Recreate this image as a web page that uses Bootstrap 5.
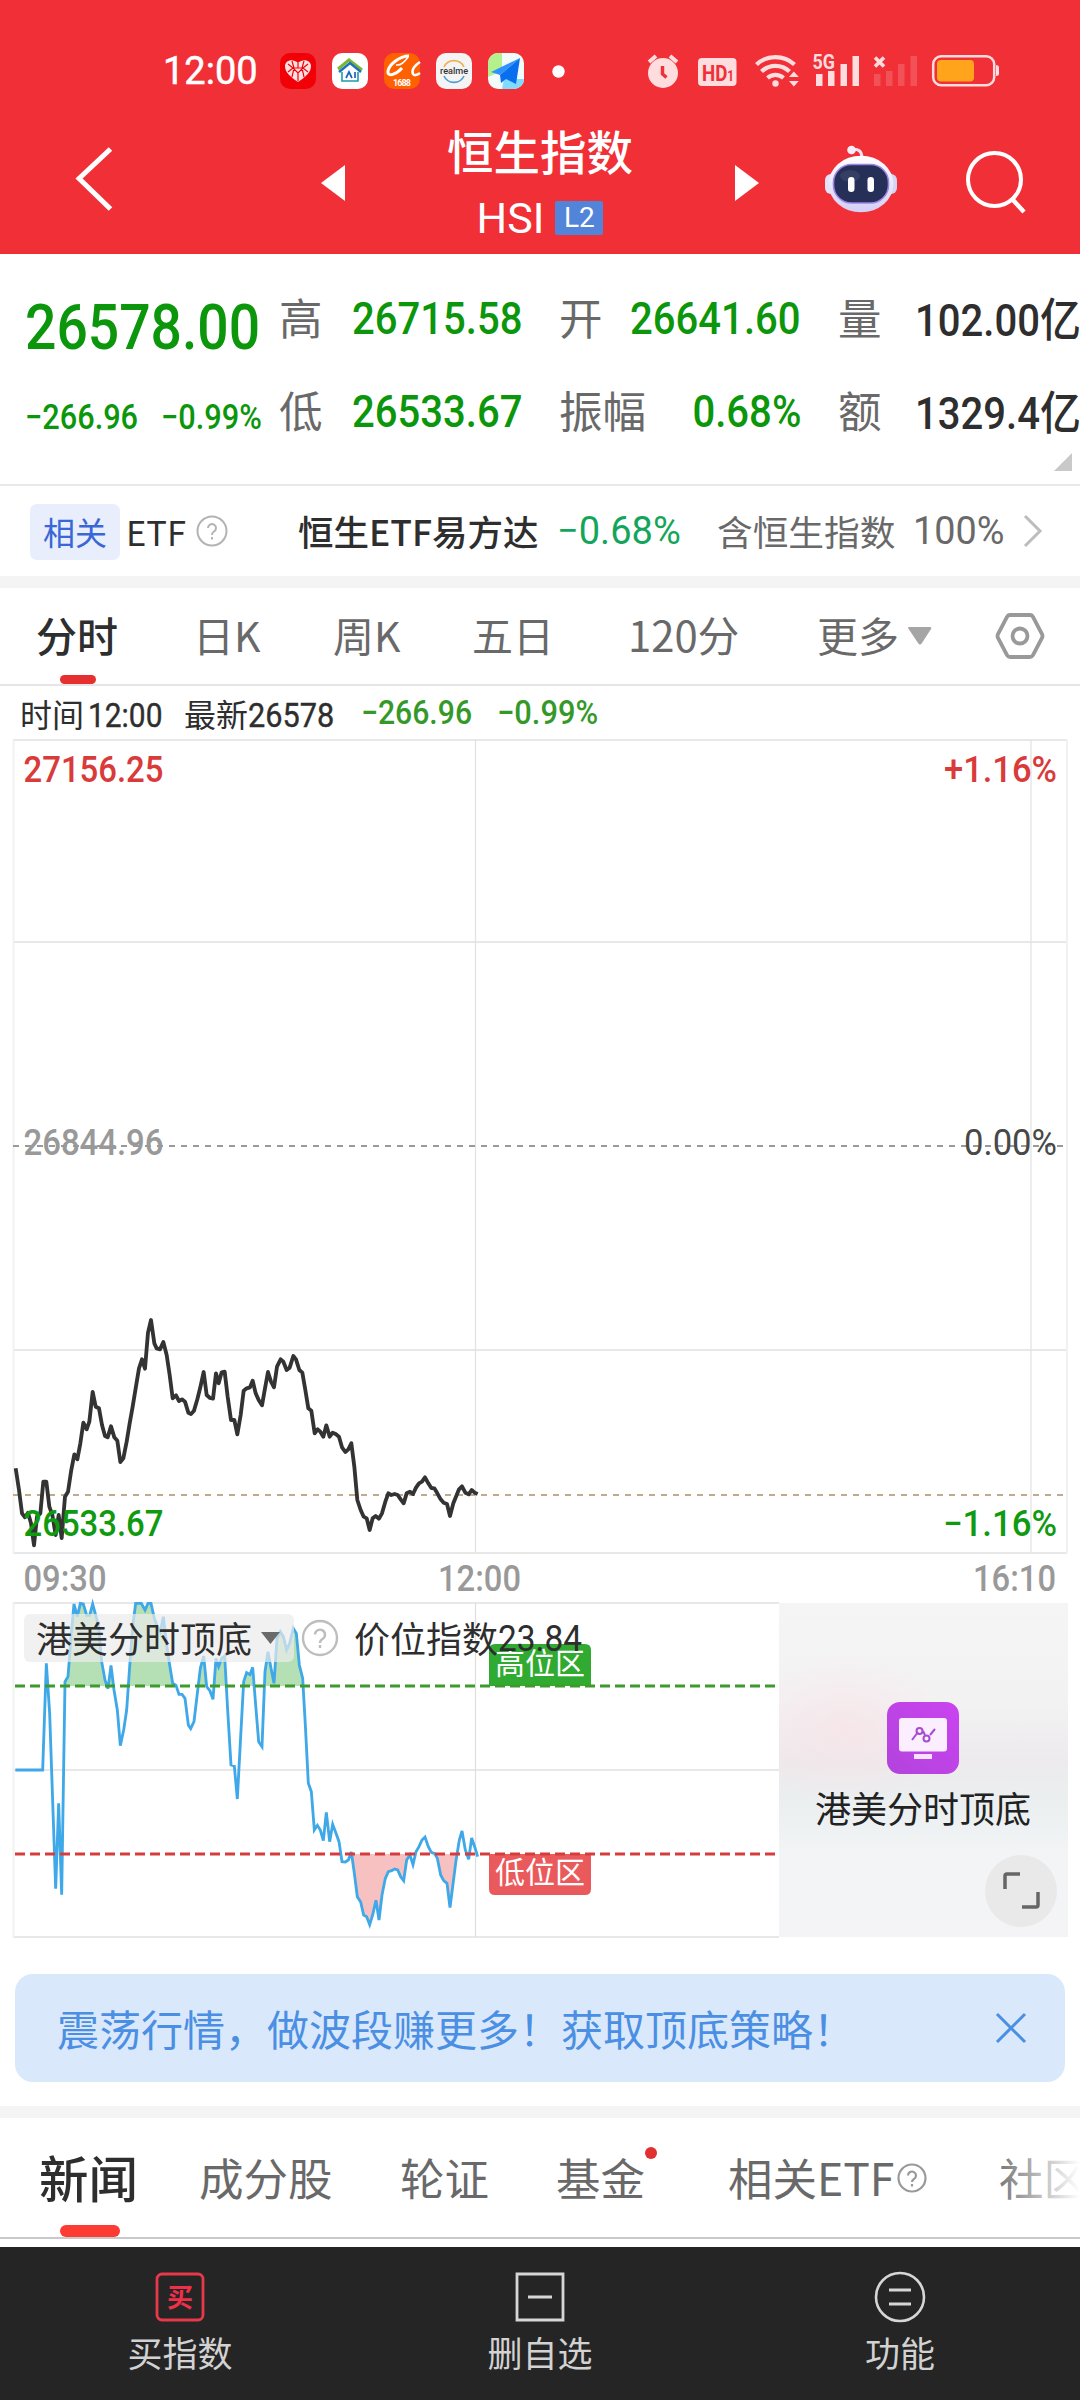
<!DOCTYPE html>
<html lang="zh-CN">
<head>
<meta charset="utf-8">
<meta name="viewport" content="width=device-width, initial-scale=1">
<title>恒生指数 HSI</title>
<link href="https://cdn.jsdelivr.net/npm/bootstrap@5.3.0/dist/css/bootstrap.min.css" rel="stylesheet">
<style>
  :root { --up: #d93a3a; --down: #0b960b; --ink: #2e2e2e; --sub: #696969; }
  html, body { margin: 0; background: #fff; }
  body { width: 1080px; height: 2400px; overflow: hidden; color: var(--ink); font-family: "Noto Sans CJK SC", sans-serif; line-height: 1; }
  svg { display: block; flex: none; overflow: visible; }
  .din { font-family: Roboto, sans-serif; font-weight: 500; white-space: nowrap; display: inline-block; flex: none; transform-origin: 0 50%; transform: scaleX(.9); }
  .din-end { transform-origin: 100% 50%; }
  .din-thin { font-weight: 400; }
  .down { color: var(--down); }
  .app-head { height: 254px; background: #f12f37; color: #fff; }
  .status-bar { height: 92px; padding: 50px 81px 0 163px; }
  .clock { font: 400 38px/42px Roboto, sans-serif; width: 117px; -webkit-text-stroke: .5px #fff; }
  .app-ic { margin-right: 16px; }
  .title-bar { height: 162px; padding: 30px 54px 0 76px; }
  .title-name { font-size: 46.5px; line-height: 56px; font-weight: 500; }
  .title-code { font: 400 43px/42px Roboto, sans-serif; }
  .lv { background: #5285d9; width: 48px; height: 34px; border-radius: 2px; font: 400 28px/34px Roboto, sans-serif; text-align: center; margin-left: 11px; }
  .quote { height: 232px; border-bottom: 2px solid #e9e9e9; padding-top: 18px; position: relative; overflow: hidden;
    display: grid; grid-template-columns: 279px 73px 207px 90px 152px 37px 77px 165px; grid-template-rows: 93px 93px; align-items: center; }
  .quote .lab { font-size: 43.5px; line-height: 44px; margin-top: -3px; color: var(--sub); white-space: nowrap; }
  .quote .val { font-size: 45px; line-height: 54px; transform: scaleX(.89); }
  .quote .big { font-size: 63.5px; font-weight: 500; transform: scaleX(.87); margin-top: 19px; }
  .quote .chg { font-size: 34.5px; transform: scaleX(.89); width: 136px; }
  .vol .cj { font: 500 46px/54px "Noto Sans CJK SC", sans-serif; }
  .corner { position: absolute; right: 8px; bottom: 13px; }
  .etf { height: 90px; }
  .etf-tag { width: 90px; height: 56px; margin: 1px 6px 0 30px; background: #e8eefb; color: #3a66d8; border-radius: 7px; font-size: 32px; line-height: 54px; text-align: center; }
  .band { height: 12px; background: #f4f4f4; }
  .period { height: 98px; border-bottom: 2px solid #e6e6e6; font-size: 41px; color: var(--sub); padding-left: 36px; position: relative; }
  .period span { line-height: 92px; white-space: nowrap; }
  .bar-on { position: absolute; left: 60px; bottom: 0; height: 9px; width: 36px; border-radius: 5px; background: #e63030; }
  .info { height: 54px; font-size: 32px; padding-left: 20px; line-height: 54px; white-space: nowrap; }
  .chart text { font-family: Roboto, sans-serif; font-weight: 500; font-size: 36px; }
  .chart .cjk { font-family: "Noto Sans CJK SC", sans-serif; font-weight: 400; }
  .notice { margin: 36px 15px 0 15px; height: 108px; border-radius: 18px; background: #dae8fb; color: #4a8fe3; font-size: 42px; padding: 0 39px 0 42px; }
  .news { height: 121px; border-bottom: 2px solid #c9c9c9; color: var(--sub); font-size: 44.5px; padding-left: 39px; position: relative; white-space: nowrap; overflow: hidden; }
  .news span { line-height: 118px; flex: none; }
  .fade-end { position: absolute; right: 0; top: 0; width: 90px; height: 118px; background: linear-gradient(90deg, rgba(255,255,255,0), #fff); }
  .news-on { position: absolute; left: 60px; bottom: 0; width: 60px; height: 12px; border-radius: 6px; background: #fc3b33; }
  .news-dot { position: absolute; left: 645px; top: 29px; width: 12px; height: 12px; border-radius: 50%; background: #e03030; }
  .dock { height: 153px; background: #252525; color: #d2d2d2; margin-top: 8px; font-size: 35px; padding-top: 25px; }
  .dock span { line-height: 46px; margin-top: 7px; }
</style>
<script src="https://cdn.jsdelivr.net/npm/bootstrap@5.3.0/dist/js/bootstrap.bundle.min.js"></script>
</head>
<body>
<header class="app-head">
  <div class="status-bar d-flex align-items-center">
    <span class="clock">12:00</span>
    <svg class="app-ic" width="36" height="36" viewBox="0 0 36 36"><rect width="36" height="36" rx="10" fill="#f20008"/><path d="M18 29 C11 24 5 20 5 13 C5 7 13 5 18 10 C23 5 31 7 31 13 C31 20 25 24 18 29Z" fill="#ffe1e1"/><path d="M8 11l5 4-5 4m20-8-5 4 5 4M12 8l2 7-2 9m12-16-2 7 2 9M18 10v5m-5 0h10l-5 5zM18 20v8" stroke="#f20008" stroke-width="1.200" fill="none"/></svg>
    <svg class="app-ic" width="36" height="36" viewBox="0 0 36 36"><rect width="36" height="36" rx="10" fill="#fff"/><path d="M6 16 17 7l13 10" fill="none" stroke="#78b833" stroke-width="3"/><path d="M7 19 18 10l11 9" fill="none" stroke="#1f70c0" stroke-width="2.400"/><path d="M10 19v9h16v-9" fill="none" stroke="#1d9bb0" stroke-width="1.600"/><path d="m14 25 3-6 3 6m3-6v6" fill="none" stroke="#1a65b8" stroke-width="1.700"/></svg>
    <svg class="app-ic" width="36" height="36" viewBox="0 0 36 36"><rect width="36" height="36" rx="10" fill="#ff6000"/><path d="M25 3C15 3 5 12 4 18c-1 7 9 3 14-3" fill="none" stroke="#fff" stroke-width="3"/><path d="M12 12q6 1 12-8" fill="none" stroke="#fff" stroke-width="1.500"/><path d="M36 9c-5 3-9 8-7 12 1 2 4 1 7-1" fill="none" stroke="#fff" stroke-width="2.600"/><text x="9" y="33" font-family="Roboto" font-weight="700" font-size="9" textLength="18" fill="#fff">1688</text></svg>
    <svg class="app-ic" width="36" height="36" viewBox="0 0 36 36"><rect width="36" height="36" rx="10" fill="#f4f4f4"/><path d="M8 14a11 11 0 0 1 20 0" fill="none" stroke="#efb057" stroke-width="1.600"/><path d="M8 23a11 11 0 0 0 20 0" fill="none" stroke="#4e9bd8" stroke-width="1.600"/><text x="4" y="21" font-family="Roboto" font-weight="500" font-size="9.500" textLength="28" lengthAdjust="spacingAndGlyphs" fill="#333">realme</text></svg>
    <svg class="app-ic" width="36" height="36" viewBox="0 0 36 36"><rect width="36" height="36" rx="10" fill="#f2fbfb"/><path d="M10 0h4v18L0 24V10A10 10 0 0 1 10 0Z" fill="#b4f08c"/><path d="M16 26h20a10 10 0 0 1-10 10H14z" fill="#7fdcff"/><path d="M32 5 3 19l9 3z" fill="#2d92ff"/><path d="m32 5-20 17 1 8 5-4 10 5z" fill="#0a6fee"/></svg>
    <svg width="13" height="13" viewBox="0 0 13 13" style="margin-left:12px"><circle cx="6.500" cy="6.500" r="6.200" fill="#fff"/></svg>
    <svg class="ms-auto" width="354" height="38" viewBox="645 52 354 38" fill="#ffdcdd">
      <circle cx="663" cy="73" r="15"/><path d="m649 62 7-6m21 6-7-6" stroke="#ffdcdd" stroke-width="4" fill="none"/><path d="M662.500 66v8l4 3.500" stroke="#f12f37" stroke-width="3.400" fill="none"/>
      <rect x="698" y="58" width="38.500" height="28" rx="4"/><text x="702" y="80.500" font-family="Roboto" font-weight="700" font-size="22.500" textLength="32" lengthAdjust="spacingAndGlyphs" fill="#f12f37">HD<tspan font-size="14">1</tspan></text>
      <g fill="none" stroke="#ffdcdd" stroke-width="4.200"><path d="M756.500 64.500a28 28 0 0 1 38 0"/><path d="M761.500 71.500a20 20 0 0 1 28 0"/><path d="M767.500 78a12 12 0 0 1 16 0"/></g><circle cx="775.500" cy="83.500" r="3.200"/><path d="m789 77 4.800-5.500 5 5.500zm0 4 4.800 5.500 5-5.500z"/>
      <text x="812.500" y="69" font-family="Roboto" font-weight="700" font-size="20.500" textLength="22.500" lengthAdjust="spacingAndGlyphs">5G</text>
      <path d="M816 74h6.500v12H816zM828 71h6.500v15H828zM840.500 64h6.500v22h-6.500zM852.500 56h6.500v30h-6.500z"/>
      <path d="m875 57.500 9 9m0-9-9 9" stroke="#ffdcdd" stroke-width="3.600"/><path opacity=".2" d="M874 74h6.500v12H874zM886 71h6.500v15H886zM898 64h6.500v22H898zM910.500 56h6.500v30h-6.500z"/>
      <rect x="933.200" y="56.200" width="61" height="29" rx="8" fill="none" stroke="#ffdcdd" stroke-width="2.500"/><rect x="937" y="60" width="37" height="21.500" rx="4" fill="#ffa41b"/><path d="M996 65q3 0 3 2.500v6q0 2.500-3 2.500z"/>
    </svg>
  </div>
  <div class="title-bar d-flex align-items-start">
    <svg width="36" height="64" viewBox="0 0 36 66" preserveAspectRatio="none" style="margin-top:25px"><path d="M34.500 2 3 32.500 34.500 64" fill="none" stroke="#fff" stroke-width="5"/></svg>
    <svg width="24" height="36" viewBox="0 0 24 36" style="margin:43px 0 0 209px"><path d="M0 18 24 0v36z" fill="#fff"/></svg>
    <div style="width:390px" class="d-flex flex-column align-items-center">
      <div class="title-name">恒生指数</div>
      <div class="d-flex align-items-center" style="margin-top:19px"><span class="title-code">HSI</span><span class="lv">L2</span></div>
    </div>
    <svg width="24" height="36" viewBox="0 0 24 36" style="margin-top:43px"><path d="M24 18 0 0v36z" fill="#fff"/></svg>
    <svg width="74" height="68" viewBox="824 145 74 68" style="margin:23px 0 0 65px">
      <defs><linearGradient id="shell" x1="0" y1="0" x2="0" y2="1"><stop offset="0" stop-color="#fff"/><stop offset=".6" stop-color="#e4e2fb"/><stop offset="1" stop-color="#d3cff6"/></linearGradient></defs>
      <path d="M851 149.500q11-2 11 9" fill="none" stroke="#f1e3f4" stroke-width="3"/><circle cx="851.500" cy="150" r="4.300" fill="#f6edf8"/>
      <rect x="825" y="174" width="14" height="20" rx="6" fill="#e4e2fa"/><rect x="883" y="174" width="14" height="20" rx="6" fill="#d6d4f6"/>
      <ellipse cx="861" cy="184" rx="32.500" ry="28.300" fill="url(#shell)"/><rect x="833.500" y="164.500" width="55" height="38.500" rx="18" fill="#262f57" stroke="#9d84e4" stroke-width="1.600"/><ellipse cx="850" cy="176" rx="10" ry="6" fill="#42506f" opacity=".5"/><rect x="848" y="177" width="6.500" height="15" rx="3.200" fill="#fff"/><rect x="867.500" y="177" width="6.500" height="15" rx="3.200" fill="#fff"/>
    </svg>
    <svg class="ms-auto" width="60" height="62" viewBox="966 152 60 62" style="margin-top:29px"><circle cx="994.500" cy="180.500" r="26.500" fill="none" stroke="#fff" stroke-width="4"/><path d="m1013 201 11 12" stroke="#fff" stroke-width="4.500"/></svg>
  </div>
</header>

<section class="quote">
  <div style="padding-left:25px"><span class="din big down">26578.00</span></div>
  <span class="lab">高</span><span class="din val down">26715.58</span><span class="lab">开</span><span class="d-flex justify-content-end"><span class="din din-end val down">26641.60</span></span><span></span><span class="lab">量</span><span class="din val vol">102.00<span class="cj">亿</span></span>
  <div class="d-flex down" style="padding:12px 0 0 25px"><span class="din chg">−266.96</span><span class="din chg">−0.99%</span></div>
  <span class="lab">低</span><span class="din val down">26533.67</span><span class="lab">振幅</span><span class="d-flex justify-content-end"><span class="din din-end val down">0.68%</span></span><span></span><span class="lab">额</span><span class="din val vol">1329.4<span class="cj">亿</span></span>
  <svg class="corner" width="18" height="18" viewBox="0 0 18 18"><path d="M18 0v18H0z" fill="#c9c9c9"/></svg>
</section>

<section class="etf d-flex align-items-center">
  <span class="etf-tag">相关</span><span style="font-size:34.500px;width:70px">ETF</span>
  <svg width="32" height="32" viewBox="0 0 32 32"><circle cx="16" cy="16" r="14.500" fill="none" stroke="#b3b3b3" stroke-width="2"/><path d="M12 13a4 4 0 1 1 6 3.500q-2 1.200-2 3.500m0 2v2.500" fill="none" stroke="#b3b3b3" stroke-width="2"/></svg>
  <span class="text-nowrap" style="font-size:35.500px;font-weight:500;margin-left:70px;width:259px">恒生ETF易方达</span>
  <span class="din din-thin" style="font-size:39px;color:#13a65a;width:160px;transform:scaleX(.975)">−0.68%</span>
  <span class="text-nowrap" style="font-size:35.700px;color:var(--sub);width:196px">含恒生指数</span>
  <span class="din din-thin" style="font-size:39px;color:var(--sub);width:110px;transform:scaleX(.97)">100%</span>
  <svg width="20" height="34" viewBox="0 0 20 34"><path d="m2 2 15 15L2 32" fill="none" stroke="#bdbdbd" stroke-width="3"/></svg>
</section>
<div class="band"></div>

<nav class="period d-flex">
  <span style="width:157px;color:var(--ink);font-weight:500">分时</span><span style="width:140px">日K</span><span style="width:139px">周K</span><span style="width:156px">五日</span><span style="width:189px;font-size:41.800px">120分</span><span>更多</span>
  <svg width="24" height="18" viewBox="0 0 24 18" style="margin:39px 0 0 9px"><path d="M0 1q0-1 1-1h21q2 0 1 2L14 16q-2 3-4 0z" fill="#a5a5a5"/></svg>
  <svg width="50" height="48" viewBox="0 0 50 48" style="margin:24px 0 0 63px"><path d="M15 3h20q2 0 3 2l9 17q1 2 0 4l-9 17q-1 2-3 2H15q-2 0-3-2L3 26q-1-2 0-4l9-17q1-2 3-2z" fill="none" stroke="#999" stroke-width="3.800"/><circle cx="25" cy="24" r="7.500" fill="none" stroke="#999" stroke-width="3.800"/></svg>
  <i class="bar-on"></i>
</nav>

<div class="info d-flex">
  <span style="width:164px">时间<span class="din din-thin ms-1" style="font-size:32.500px;transform:scaleX(.92);-webkit-text-stroke:.4px">12:00</span></span>
  <span style="width:177px">最新<span class="din din-thin" style="font-size:33px;transform:scaleX(.93);-webkit-text-stroke:.4px">26578</span></span>
  <span class="din" style="font-size:33.500px;width:136px;color:#35992a;transform:scaleX(.9)">−266.96</span><span class="din" style="font-size:33.500px;color:#35992a;transform:scaleX(.92)">−0.99%</span>
</div>

<svg class="chart" width="1080" height="1198" viewBox="0 740 1080 1198">
  <defs>
    <clipPath id="hi"><path d="M190 30H1000V288H190z"/></clipPath>
    <clipPath id="pane"><path d="M779 1603H1068V1937H779z"/></clipPath>
    <path id="osc" d="M46 540H128L139 220 149 370 167 896 176 640 185 914 195 275 204 260 214 130 222 42 232 80 241 40 250 42 260 76 269 76 278 42 287 75 296 110 305 215 315 270 324 296 333 226 342 300 352 360 361 467 371 420 380 360 389 230 398 110 407 40H424L435 60 444 40H453L463 85 472 110 481 125 490 80 500 165 509 225 518 280 528 286 537 313 546 313 555 325 565 405 572 416 582 395 592 310 601 235 611 198 620 290 630 303 639 328 648 205 656 230 665 205 674 198 683 360 693 525 703 528 712 627 722 440 731 275 740 248 750 254 758 232 767 345 776 455 786 470 795 245 804 185 813 235 822 280 831 145 841 125 850 140 860 180 869 160 880 115 889 130 898 225 908 265 916 405 925 580 934 605 943 720 952 706 961 720 970 752 979 667 989 755 998 703 1008 730 1017 755 1026 815 1036 816 1045 810 1054 786 1063 850 1072 920 1082 936 1091 975 1100 980 1109 1004 1118 975 1128 931 1137 990 1146 915 1156 865 1165 845 1175 842 1184 837 1193 840 1202 860 1211 872 1220 810 1230 795 1239 824 1248 785 1257 770 1266 750 1275 741 1285 770 1294 787 1303 790 1312 805 1322 855 1331 872 1341 880 1350 953 1360 875 1368 812 1378 750 1386 723 1396 780 1406 808 1415 744 1424 770 1433 800"/>
    <radialGradient id="blush"><stop offset="0" stop-color="#f8e2e7"/><stop offset="1" stop-color="#f8e2e7" stop-opacity="0"/></radialGradient>
    <linearGradient id="mist" x1="0" y1="0" x2="0" y2="1"><stop offset="0" stop-color="#f5f5f6"/><stop offset=".3" stop-color="#f3f2f3"/><stop offset=".48" stop-color="#eceaec"/><stop offset=".6" stop-color="#ebeff0"/><stop offset=".75" stop-color="#f2f4f6"/><stop offset="1" stop-color="#f4f4f7"/></linearGradient>
    <linearGradient id="violet" x1="0" y1="1" x2="1" y2="0"><stop offset="0" stop-color="#b243dc"/><stop offset="1" stop-color="#ca44f0"/></linearGradient>
  </defs>
  <g fill="none" stroke="#e8e8e8" stroke-width="2">
    <path d="M13 740H1067M13 942H1067M13 1350H1067M13 1553H1067" />
    <path d="M13.500 740V1553M1067 740V1553" stroke="#f1f1f1"/><path d="M475.500 740V1553M1031 740V1553" stroke="#e2e2e2" stroke-width="1.200"/>
    <path d="M13 1603H779M13 1770H779M13 1937H779"/><path d="M13.500 1603V1937" stroke="#f1f1f1"/><path d="M475.500 1603V1937" stroke="#dedede" stroke-width="1.200"/>
  </g>
  <path d="M13 1146H1067" stroke="#999" stroke-width="2" stroke-dasharray="6 6"/>
  <path d="M13 1495H1067" stroke="#c2a98c" stroke-width="1.800" stroke-dasharray="6 6"/>
  <path transform="translate(0 1300) scale(.33333)" fill="none" stroke="#333" stroke-width="11.500" stroke-linejoin="round" d="M47 505 57 570 66 640 75 652 84 638 93 670 102 736 111 650 121 640 130 545H139L148 620 157 645 167 705 176 645 185 714 195 590 204 575 213 515 223 463 232 478 241 430 250 368 260 388 268 365 278 276 287 320 297 325 306 375 315 408 323 412 333 379 343 412 352 422 361 486 370 475 380 425 389 370 398 320 407 265 417 205 426 178 435 206 444 98 453 60 463 130 470 145 480 148 490 126 500 165 509 225 518 295 528 286 537 303 546 298 555 305 565 338 573 342 582 332 592 298 601 262 611 216 620 285 630 294 639 296 648 220 656 250 665 217 674 215 683 290 693 360 703 360 712 403 722 345 731 272 740 265 750 262 758 242 767 280 776 300 786 316 795 265 804 216 813 245 822 262 831 200 842 178 850 185 860 210 869 203 880 168 888 178 898 210 907 218 916 270 925 325 934 332 944 400 953 388 961 395 970 410 979 376 989 410 998 398 1007 402 1017 410 1026 442 1036 456 1045 448 1054 430 1063 500 1072 600 1082 630 1091 650 1100 655 1109 690 1118 655 1127 648 1137 656 1146 640 1156 605 1165 580 1174 585 1184 582 1193 585 1202 598 1211 610 1220 580 1230 575 1239 582 1248 563 1257 550 1266 545 1275 532 1285 550 1294 564 1303 565 1312 580 1322 598 1331 608 1341 612 1350 648 1360 610 1368 590 1377 568 1386 559 1396 578 1406 583 1415 570 1424 578 1433 582"/>
  <g>
    <text x="23.500" y="782" textLength="140" lengthAdjust="spacingAndGlyphs" fill="#d93a3a">27156.25</text>
    <text x="944" y="782" textLength="113" lengthAdjust="spacingAndGlyphs" fill="#d93a3a">+1.16%</text>
    <text x="23.500" y="1155" textLength="140" lengthAdjust="spacingAndGlyphs" fill="#999">26844.96</text>
    <text x="964" y="1155" textLength="93" lengthAdjust="spacingAndGlyphs" fill="#484848" style="font-weight:400">0.00%</text>
    <text x="23.500" y="1536" textLength="140" lengthAdjust="spacingAndGlyphs" fill="#109a10">26533.67</text>
    <text x="943" y="1536" textLength="114" lengthAdjust="spacingAndGlyphs" fill="#109a10">−1.16%</text>
    <g fill="#999"><text x="23.500" y="1591" textLength="83" lengthAdjust="spacingAndGlyphs">09:30</text><text x="438" y="1591" textLength="83" lengthAdjust="spacingAndGlyphs">12:00</text><text x="973" y="1591" textLength="83" lengthAdjust="spacingAndGlyphs">16:10</text></g>
  </g>
  <g transform="translate(0 1590) scale(.33333)">
    <g clip-path="url(#hi)"><use href="#osc" fill="#b5e0b5"/></g>
    <path fill="#f7c1c1" d="M1056 792 1063 850 1072 920 1082 936 1091 975 1100 980 1109 1004 1118 975 1128 931 1137 990 1146 915 1156 865 1165 845 1175 842 1184 837 1193 840 1202 860 1211 872 1220 810 1232 792zM1303 792 1312 805 1322 855 1331 872 1341 880 1350 953 1360 875 1370 792z"/>
    <use href="#osc" fill="none" stroke="#3fa8e8" stroke-width="8.500"/>
  </g>
  <rect x="24" y="1614" width="270" height="48" rx="6" fill="#ebebeb" fill-opacity=".7"/>
  <path d="M489 1686V1650q0-6 6-6H585q6 0 6 6V1686z" fill="#30aa30"/><path d="M489 1854V1889q0 6 6 6H585q6 0 6-6V1854z" fill="#ea5a5c"/>
  <path d="M15 1686H777" stroke="#3f9a2c" stroke-width="3.200" stroke-dasharray="10 5"/><path d="M15 1854H777" stroke="#d63c3c" stroke-width="3.200" stroke-dasharray="10 5"/>
  <text class="cjk" x="36" y="1652.500" style="font-size:36px" fill="#2e2e2e">港美分时顶底</text>
  <path d="M261 1632H280L270.500 1644z" fill="#6a6a6a"/>
  <circle cx="320" cy="1638" r="17" fill="none" stroke="#bdbdbd" stroke-width="2.400"/><path d="M315 1634.500a5 5 0 1 1 7.500 4.500q-2.500 1.500-2.500 4m0 2v3" fill="none" stroke="#bdbdbd" stroke-width="2.400"/>
  <text class="cjk" x="495" y="1674" style="font-size:30px" fill="#fff">高位区</text><text class="cjk" x="495" y="1883" style="font-size:30px" fill="#fff">低位区</text>
  <text class="cjk" x="354" y="1652.500" style="font-size:36px" fill="#2e2e2e">价位指数</text><text x="498" y="1651" textLength="84" lengthAdjust="spacingAndGlyphs" fill="#2e2e2e" style="font-weight:400">23.84</text>
  <rect x="779" y="1603" width="289" height="334" fill="url(#mist)"/><ellipse clip-path="url(#pane)" cx="845" cy="1730" rx="110" ry="75" fill="url(#blush)" opacity=".7"/>
  <rect x="887" y="1702" width="72" height="72" rx="13" fill="url(#violet)"/><rect x="899" y="1718" width="48" height="33.500" rx="3" fill="#fbeeff"/><rect x="914" y="1754" width="18" height="5" fill="#fbe3ff"/>
  <g fill="none" stroke="#a84bd0" stroke-width="2"><path d="m912 1740 6-8m5-1 2 4m5 0 5-6"/><circle cx="919.500" cy="1731" r="3"/><circle cx="926.500" cy="1738.500" r="3"/></g>
  <text class="cjk" x="815" y="1823" style="font-size:36px" fill="#222">港美分时顶底</text>
  <circle cx="1021" cy="1891" r="36" fill="#e9e9ea"/><path d="M1005 1889V1876q0-2 2-2h13m18 18v13q0 2-2 2h-14" fill="none" stroke="#666" stroke-width="3.500"/>
</svg>

<div class="notice d-flex align-items-center"><span>震荡行情，做波段赚更多！获取顶底策略！</span>
  <svg class="ms-auto" width="30" height="30" viewBox="0 0 30 30"><path d="m1 1 28 28M29 1 1 29" stroke="#4a8fe3" stroke-width="3"/></svg></div>
<div class="band" style="margin-top:24px"></div>

<nav class="news d-flex">
  <span style="width:160px;color:var(--ink);font-size:49.500px;font-weight:500">新闻</span><span style="width:201px">成分股</span><span style="width:156px">轮证</span><span style="width:172px">基金</span><span style="width:169px">相关ETF</span>
  <svg width="30" height="30" viewBox="0 0 30 30" style="margin-top:45px"><circle cx="15" cy="15" r="13.500" fill="none" stroke="#999" stroke-width="2.200"/><path d="M11 12.500a4 4 0 1 1 6 3.500q-2 1.200-2 3m0 2v2.500" fill="none" stroke="#999" stroke-width="2.200"/></svg>
  <span style="margin-left:72px">社区</span>
  <i class="fade-end"></i><i class="news-on"></i><i class="news-dot"></i>
</nav>

<footer class="dock d-flex">
  <div class="col-4 d-flex flex-column align-items-center"><svg width="50" height="50" viewBox="0 0 50 50"><rect x="2" y="2" width="46" height="46" rx="5" fill="none" stroke="#e8394a" stroke-width="2.800"/><text x="12" y="34.500" font-family="Noto Sans CJK SC" font-weight="700" font-size="26" fill="#f0304a">买</text></svg><span>买指数</span></div>
  <div class="col-4 d-flex flex-column align-items-center"><svg width="50" height="50" viewBox="0 0 50 50"><path d="M2 2H48V48H2zM13 25H37" fill="none" stroke="#d6d6d6" stroke-width="2.800"/></svg><span>删自选</span></div>
  <div class="col-4 d-flex flex-column align-items-center"><svg width="50" height="50" viewBox="0 0 50 50"><circle cx="25" cy="25" r="24" fill="none" stroke="#d6d6d6" stroke-width="2.600"/><path d="M14 18H36M14 32H36" stroke="#d6d6d6" stroke-width="3"/></svg><span>功能</span></div>
</footer>
</body>
</html>
